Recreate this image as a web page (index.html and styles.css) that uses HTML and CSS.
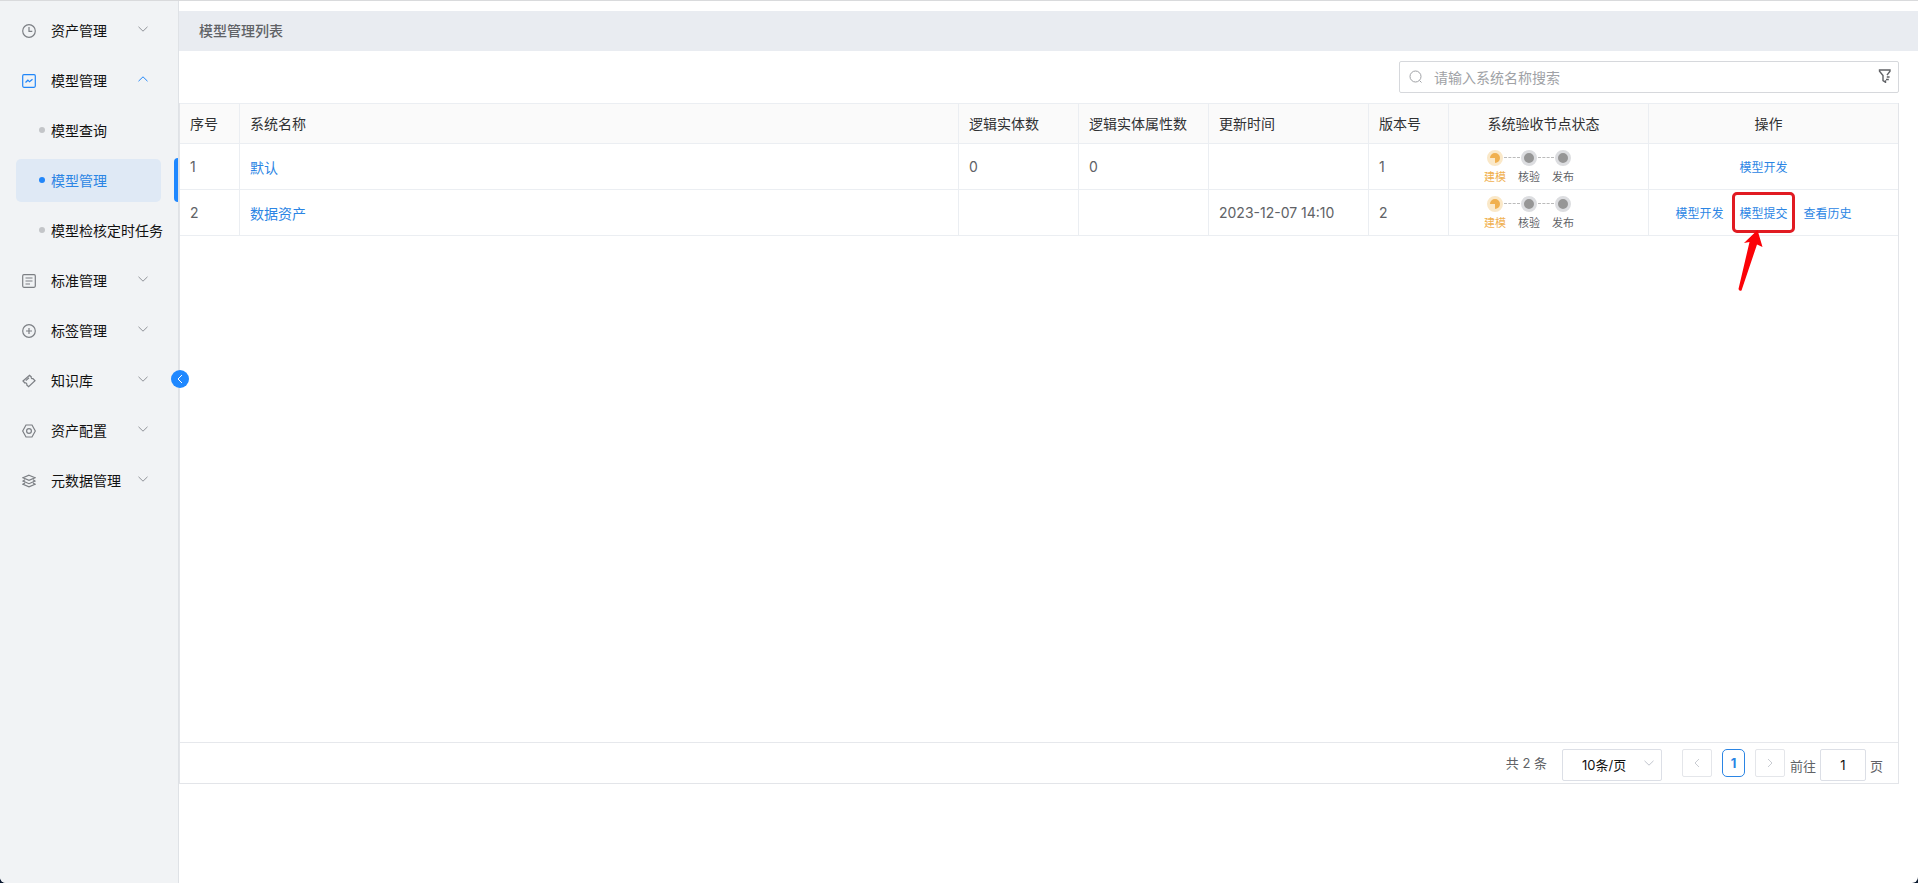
FILE: index.html
```html
<!DOCTYPE html>
<html lang="zh-CN">
<head>
<meta charset="utf-8">
<title>模型管理</title>
<link rel="stylesheet" href="styles.css">
</head>
<body>
<svg class="defs" aria-hidden="true">
  <symbol id="down" viewBox="0 0 10 6"><path d="M.5 .8L5 5.200 9.500 .8"/></symbol>
  <symbol id="left" viewBox="0 0 6 10"><path d="M5 1L1 5l4 4"/></symbol>
</svg>
<div class="app">
  <aside class="side">
    <nav class="menu">
      <button class="item"><svg class="ico" viewBox="0 0 14 14"><circle cx="7" cy="7" r="6.3"/><path d="M7 3v4.300h3.300"/></svg><span class="label">资产管理</span><svg class="chev"><use href="#down"/></svg></button>
      <button class="item open"><svg class="ico" viewBox="0 0 14 14"><rect x=".7" y=".7" width="12.6" height="12.6" rx="1.2"/><path d="M3.500 8.500l2.400-2.300 1.600 1.600 3-2.600"/></svg><span class="label">模型管理</span><svg class="chev"><use href="#down"/></svg></button>
      <a class="sub" href="#"><span class="pill"><i class="dot"></i><span>模型查询</span></span></a>
      <a class="sub active" href="#"><span class="pill"><i class="dot"></i><span>模型管理</span></span></a>
      <a class="sub" href="#"><span class="pill"><i class="dot"></i><span>模型检核定时任务</span></span></a>
      <button class="item"><svg class="ico" viewBox="0 0 14 14"><rect x=".7" y=".7" width="12.6" height="12.6" rx="1.2"/><path d="M3.500 4h7M3.500 7h7M3.500 10h4.500"/></svg><span class="label">标准管理</span><svg class="chev"><use href="#down"/></svg></button>
      <button class="item"><svg class="ico" viewBox="0 0 14 14"><circle cx="7" cy="7" r="6.3"/><path d="M7 4v6M4 7h6"/></svg><span class="label">标签管理</span><svg class="chev"><use href="#down"/></svg></button>
      <button class="item"><svg class="ico" viewBox="0 0 14 14"><path d="M1 7L7.500 1.200l1.700 1.600c-.3 1.200.5 2 1.800 1.800l2 2.200-6.400 5.800L4.800 11c.3-1.300-.4-2.200-1.900-2zM3.800 6.600L7 3.800"/></svg><span class="label">知识库</span><svg class="chev"><use href="#down"/></svg></button>
      <button class="item"><svg class="ico" viewBox="0 0 14 14"><path d="M4 1h6l3.300 6L10 13H4L.7 7z"/><circle cx="7" cy="7" r="2.400"/></svg><span class="label">资产配置</span><svg class="chev"><use href="#down"/></svg></button>
      <button class="item"><svg class="ico" viewBox="0 0 14 14"><path d="M7 1.200l6 2.600-6 2.600-6-2.600zM3 5.800L1 7l6 2.700L13 7l-2-1.200M3 9l-2 1.200 6 2.700 6-2.700L11 9"/></svg><span class="label">元数据管理</span><svg class="chev"><use href="#down"/></svg></button>
    </nav>
    <button class="collapse" aria-label="收起菜单"><svg viewBox="0 0 6 10"><use href="#left"/></svg></button>
  </aside>
  <main class="main">
    <h1 class="title">模型管理列表</h1>
    <div class="tools">
      <label class="search">
        <svg class="mag" viewBox="0 0 14 14"><circle cx="6.500" cy="6.500" r="5.500"/><path d="M10.500 10.500l2 2"/></svg>
        <input type="text" placeholder="请输入系统名称搜索" aria-label="请输入系统名称搜索">
        <svg class="filter" viewBox="0 0 14 14"><path d="M9 6.200l3-4V1H1.500v1.200L5 6.500v5.200l2.500 1.600v-2M8.800 8h2.800M8 10.500h2.800"/></svg>
      </label>
    </div>
    <section class="panel">
      <table class="grid">
        <colgroup><col class="w60"><col><col class="w120"><col class="w130"><col class="w160"><col class="w80"><col class="w200"><col class="w250"></colgroup>
        <thead><tr><th>序号</th><th>系统名称</th><th>逻辑实体数</th><th>逻辑实体属性数</th><th>更新时间</th><th>版本号</th><th class="mid">系统验收节点状态</th><th class="mid">操作</th></tr></thead>
        <tbody>
          <tr><td>1</td><td><a href="#">默认</a></td><td>0</td><td>0</td><td></td><td>1</td>
            <td><ol class="steps"><li class="now"><i></i>建模</li><li><i></i>核验</li><li><i></i>发布</li></ol></td>
            <td><div class="ops"><a href="#">模型开发</a></div></td></tr>
          <tr><td>2</td><td><a href="#">数据资产</a></td><td></td><td></td><td>2023-12-07 14:10</td><td>2</td>
            <td><ol class="steps"><li class="now"><i></i>建模</li><li><i></i>核验</li><li><i></i>发布</li></ol></td>
            <td><div class="ops"><a href="#">模型开发</a><a class="marked" href="#">模型提交<span class="frame"></span><svg class="arrow" viewBox="0 0 26 62"><path d="M19.500 0L6 13l5.500-1L.5 59q.5 2.500 3 1.500L19 14.500l5.500 2.500z"/></svg></a><a href="#">查看历史</a></div></td></tr>
        </tbody>
      </table>
      <footer class="pager">
        <span class="total">共 2 条</span>
        <span class="size"><select aria-label="每页条数"><option>10条/页</option></select><svg class="chev"><use href="#down"/></svg></span>
        <button class="step" disabled aria-label="上一页"><svg viewBox="0 0 6 10"><use href="#left"/></svg></button>
        <button class="page">1</button>
        <button class="step next" disabled aria-label="下一页"><svg viewBox="0 0 6 10"><use href="#left"/></svg></button>
        <label class="jump">前往<input type="text" value="1">页</label>
      </footer>
    </section>
  </main>
</div>
</body>
</html>
```
FILE: styles.css
```css
* { box-sizing: border-box; }
body { margin: 0; background: #0b1a30; font-family: Inter, "Noto Sans CJK SC", sans-serif; font-size: 14px; color: #606266; }
button, input, select { font: inherit; color: inherit; }
button { cursor: pointer; }
a { color: #2b85e4; text-decoration: none; }
svg { fill: none; stroke: currentColor; }
.defs { position: absolute; width: 0; height: 0; }
.app { display: flex; min-height: 100vh; background: #fff; border-top: 1px solid #d9dadc; border-radius: 0 0 6px 6px; overflow: hidden; }

.side { position: relative; flex: none; width: 179px; background: #f1f3f5; border-right: 1px solid #dfe2e6; }
.menu { display: flex; flex-direction: column; padding-top: 5px; }
.item { display: flex; align-items: center; height: 50px; padding: 0 30px 0 22px; border: 0; background: none; color: #7c7f84; text-align: left; }
.ico { width: 14px; height: 14px; margin-right: 15px; stroke-width: 1.2; }
.label { flex: 1; padding-bottom: 2px; color: #111; }
.chev { width: 10px; height: 6px; margin-bottom: 4px; color: #909399; }
.open, .open .chev { color: #2186f9; }
.open .chev { transform: rotate(180deg); }
.sub { position: relative; display: flex; align-items: center; height: 50px; padding: 0 17px 2px 16px; color: #111; }
.pill { flex: 1; display: flex; align-items: center; height: 43px; padding-left: 23px; border-radius: 5px; white-space: nowrap; }
.dot { flex: none; width: 6px; height: 6px; margin-right: 6px; border-radius: 50%; background: #c3c5c8; }
.active { color: #2b85e4; }
.active .pill { background: #dfe9f5; }
.active .dot { background: #2186f9; }
.active::after { content: ""; position: absolute; right: 0; top: 2px; width: 4px; height: 44px; border-radius: 4px 0 0 4px; background: #1f88ff; }
.collapse { position: absolute; z-index: 1; right: -11px; top: 369px; display: grid; place-items: center; width: 18px; height: 18px; padding: 0; border: 0; border-radius: 50%; background: #1f88ff; color: #fff; }
.collapse svg { width: 6px; height: 10px; }

.main { flex: 1; min-width: 0; padding-top: 10px; }
.title { margin: 0; padding: 0 20px; background: #e9ecf1; font-size: 14px; font-weight: 500; line-height: 40px; color: #606266; }
.tools { display: flex; justify-content: flex-end; padding: 10px 19px; }
.search { display: flex; align-items: center; width: 500px; height: 32px; padding: 0 6px 0 9px; border: 1px solid #d6d8dc; border-radius: 2px; }
.search input { flex: 1; padding: 0 11px; border: 0; outline: 0; background: none; }
.search input::placeholder { color: #a0a2a6; }
.mag { width: 14px; height: 14px; color: #a0a2a6; }
.filter { width: 14px; height: 14px; margin-bottom: 3px; stroke-width: 1.4; }

.panel { display: flex; flex-direction: column; min-height: 681px; margin-right: 19px; border: 1px solid #e3e5e9; border-top: 0; }
.grid { width: 100%; table-layout: fixed; border-collapse: separate; border-spacing: 0; border-top: 1px solid #ebeef2; }
.w60 { width: 60px; } .w120 { width: 120px; } .w130 { width: 130px; } .w160 { width: 160px; }
.w80 { width: 80px; } .w200 { width: 200px; } .w250 { width: 249px; }
th, td { padding: 0 10px; border: solid #ebeef2; border-width: 0 1px 1px 0; text-align: left; white-space: nowrap; }
th:last-child, td:last-child { border-right: 0; }
th { height: 40px; padding-bottom: 2px; background: #fafafa; font-weight: 400; color: #303133; }
td { height: 46px; }
th.mid { padding: 0 20px 2px 10px; text-align: center; }
.steps { display: flex; gap: 12px; margin: 0; padding: 1px 0 0 25px; list-style: none; font-size: 11px; line-height: 14px; }
.steps li { position: relative; display: flex; flex-direction: column; align-items: center; gap: 4px; }
.steps i { width: 16px; height: 16px; border: 3px solid #dcdde0; border-radius: 50%; background: #969696; }
.steps li + li::before { content: ""; position: absolute; left: -14px; top: 7px; width: 16px; border-top: 1px dashed #bbb; }
.steps .now { color: #f0b04f; }
.steps .now i { border-color: #fae8c8; background: conic-gradient(#f0b04f 75%, #fae8c8 0); transform: rotate(-90deg); }
.ops { display: flex; justify-content: center; gap: 16px; padding-right: 20px; font-size: 12px; }
.marked { position: relative; }
.frame { position: absolute; inset: -12px -7px; border: 3px solid #e11b22; border-radius: 5px; }
.arrow { position: absolute; left: -1px; top: 26px; width: 26px; height: 62px; fill: #fb0207; stroke: none; }

.pager { display: flex; justify-content: flex-end; align-items: flex-start; margin-top: auto; padding: 6px 15px 2px; border-top: 1px solid #e6e8ec; font-size: 13px; }
.total { margin-right: 15px; line-height: 28px; }
.size { position: relative; margin-right: 20px; }
.size select { appearance: none; width: 100px; height: 32px; padding: 0 19px; border: 1px solid #dcdfe6; border-radius: 2px; background: #fff; color: #111; }
.size .chev { position: absolute; right: 8px; top: 11px; color: #c0c4cc; }
.step { display: grid; place-items: center; width: 30px; height: 28px; padding: 0; border: 1px solid #e4e6ea; border-radius: 2px; background: #fff; color: #c9ccd2; }
.step svg { width: 6px; height: 10px; }
.next svg { transform: rotate(180deg); }
.page { width: 23px; height: 28px; margin: 0 10px; padding: 0; border: 1px solid #2b85e4; border-radius: 5px; background: #fff; color: #2b85e4; font-weight: 700; }
.jump { display: flex; align-items: center; gap: 4px; margin-left: 5px; }
.jump input { width: 46px; height: 32px; padding: 0; border: 1px solid #dcdfe6; border-radius: 2px; color: #111; text-align: center; }
```
